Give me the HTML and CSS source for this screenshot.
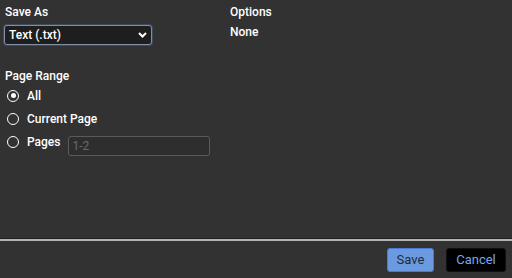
FILE: index.html
```html
<!DOCTYPE html>
<html>
<head><meta charset="utf-8"><link rel="stylesheet" href="styles.css"></head>
<body>
<div class="page">
  <div class="main">
    <div class="cols">
      <div class="col left">
        <div class="label">Save As</div>
        <div class="select"><span>Text (.txt)</span>
          <svg class="chev" width="9" height="6" viewBox="0 0 9 6"><path d="M1 1 L4.5 4.5 L8 1" fill="none" stroke="#fff" stroke-width="2"/></svg>
        </div>
      </div>
      <div class="col right">
        <div class="label">Options</div>
        <div class="value">None</div>
      </div>
    </div>
    <div class="label range">Page Range</div>
    <div class="radios">
      <div class="radio"><span class="dot checked"></span><span>All</span></div>
      <div class="radio"><span class="dot"></span><span>Current Page</span></div>
      <div class="radio"><span class="dot"></span><span>Pages</span><div class="input">1-2</div></div>
    </div>
  </div>
  <div class="sep"></div>
  <div class="footer">
    <div class="btn save">Save</div>
    <div class="btn cancel">Cancel</div>
  </div>
</div>
</body>
</html>
```
FILE: styles.css
```css
html, body { margin: 0; padding: 0; }
body { background: #323232; width: 512px; height: 278px; overflow: hidden; font-family: Roboto, "Liberation Sans", Arial, sans-serif; font-size: 12px; color: #fff; }
.page { display: flex; flex-direction: column; height: 278px; }
.main { flex: 1; padding: 5px 0 0 5px; }
.cols { display: flex; }
.col.left { width: 225px; }
.label { font-weight: 500; line-height: 14px; }
.select { margin-top: 6px; margin-left: -1px; width: 142px; height: 18px; border: 1px solid #7f8fa6; border-radius: 3px; background: #1e1e1e; display: flex; align-items: center; justify-content: space-between; padding: 0 0 0 4px; box-sizing: content-box; box-shadow: 0 0 0 1px #3c4a5e; font-weight: 500; }
.select span { line-height: 18px; }
.chev { margin-right: 4px; }
.value { margin-top: 6px; font-weight: 500; line-height: 14px; }
.range { margin-top: 24px; }
.radios { margin-top: 6px; margin-left: 2px; display: flex; flex-direction: column; gap: 10px; }
.radio { display: flex; align-items: center; gap: 8px; height: 13px; font-weight: 500; }
.dot { width: 10px; height: 10px; border: 1.5px solid #fff; border-radius: 50%; box-sizing: content-box; position: relative; }
.dot.checked::after { content: ""; position: absolute; left: 2.5px; top: 2.5px; width: 5px; height: 5px; border-radius: 50%; background: #fff; }
.input { margin-left: 0; margin-top: 9px; width: 137px; height: 18px; border: 1px solid #5a5a5a; border-radius: 3px; color: #6a6a6a; font-weight: 400; line-height: 18px; padding-left: 3px; background: #2e2e2e; }
.sep { height: 2px; background: #b3b3b3; border-top: 1px solid #1f1f1f; }
.footer { height: 36px; display: flex; justify-content: flex-end; align-items: center; gap: 12px; padding-right: 6px; padding-top: 1px; }
.btn { height: 22px; line-height: 22px; border-radius: 3px; font-size: 13px; text-align: center; }
.save { width: 45px; background: #6c9ae0; border: 1px solid #4a7bd0; color: #1e2a3c; }
.cancel { width: 58px; background: #000; border: 1px solid #111; color: #7aa7f0; }
```
